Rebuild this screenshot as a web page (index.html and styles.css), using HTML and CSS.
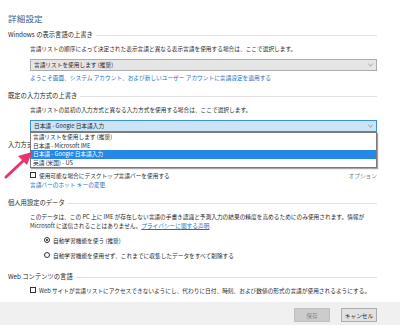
FILE: index.html
```html
<!DOCTYPE html>
<html lang="ja">
<head>
<meta charset="utf-8">
<title>詳細設定</title>
<link rel="stylesheet" href="styles.css">
</head>
<body>
<div class="window">
  <main class="content">
    <h1 class="title">詳細設定</h1>

    <section class="group">
      <h2 class="group-head">Windows の表示言語の上書き</h2>
      <p class="desc indent">言語リストの順序によって決定された表示言語と異なる表示言語を使用する場合は、ここで選択します。</p>
      <div class="select indent">
        <span>言語リストを使用します (推奨)</span>
        <svg class="chev" viewBox="0 0 6 4"><path d="M0.5 0.8 L3 3.2 L5.5 0.8" fill="none" stroke="#666" stroke-width="0.7"/></svg>
      </div>
      <a class="link indent after-select">ようこそ画面、システム アカウント、および新しいユーザー アカウントに言語設定を適用する</a>
    </section>

    <section class="group">
      <h2 class="group-head">既定の入力方式の上書き</h2>
      <p class="desc indent">言語リストの最初の入力方式と異なる入力方式を使用する場合は、ここで選択します。</p>
      <div class="select select-open indent">
        <span>日本語 - Google 日本語入力</span>
        <svg class="chev" viewBox="0 0 6 4"><path d="M0.5 0.8 L3 3.2 L5.5 0.8" fill="none" stroke="#555" stroke-width="0.7"/></svg>
        <ul class="dropdown">
          <li class="option">言語リストを使用します (推奨)</li>
          <li class="option">日本語 - Microsoft IME</li>
          <li class="option option-active">日本語 - Google 日本語入力</li>
          <li class="option">英語 (米国) - US</li>
        </ul>
      </div>
    </section>

    <section class="group">
      <h2 class="group-head">入力方式の切り替え</h2>
      <label class="check-row indent first-row"><span class="check"></span>アプリ ウィンドウごとに異なる入力方式を設定する</label>
      <div class="check-row indent row-gap">
        <span class="check"></span><span class="grow">使用可能な場合にデスクトップ言語バーを使用する</span>
        <span class="muted">オプション</span>
      </div>
      <a class="link indent">言語バーのホット キーの変更</a>
    </section>

    <section class="group">
      <h2 class="group-head">個人用設定のデータ</h2>
      <p class="desc desc-multi indent">このデータは、この PC 上に IME が存在しない言語の手書き認識と予測入力の結果の精度を高めるためにのみ使用されます。情報が<br>Microsoft に送信されることはありません。<a class="link-inline">プライバシーに関する声明</a></p>
      <label class="radio-row radio-indent first-row"><span class="radio radio-on"></span>自動学習機能を使う (推奨)</label>
      <label class="radio-row radio-indent row-gap"><span class="radio"></span>自動学習機能を使用せず、これまでに収集したデータをすべて削除する</label>
    </section>

    <section class="group group-last">
      <h2 class="group-head">Web コンテンツの言語</h2>
      <label class="check-row indent web-row"><span class="check"></span>Web サイトが言語リストにアクセスできないようにし、代わりに日付、時刻、および数値の形式の言語が使用されるようにする。</label>
    </section>
  </main>

  <footer class="footer">
    <button class="btn btn-disabled" disabled>保存</button>
    <button class="btn">キャンセル</button>
  </footer>

  <svg class="arrow" viewBox="0 0 40 44" width="40" height="44">
    <line x1="6" y1="37" x2="23" y2="21" stroke="#e8356e" stroke-width="3" stroke-linecap="round"/>
    <polygon points="32,12 27,25 18,16" fill="#e8356e"/>
  </svg>
</div>
</body>
</html>
```

FILE: styles.css
```css
* {
  box-sizing: border-box;
  margin: 0;
  padding: 0;
}

html, body {
  width: 400px;
  height: 325px;
  overflow: hidden;
  background: #fff;
}

body {
  font-family: "Noto Sans CJK JP", "Noto Sans", sans-serif;
  font-size: 5.7px;
  color: #2a2a2a;
}

.window {
  position: relative;
  height: 325px;
  display: flex;
  flex-direction: column;
}

.content {
  flex: 1;
  padding: 12px 23px 0 8px;
  display: flex;
  flex-direction: column;
}

.title {
  font-size: 8.5px;
  font-weight: normal;
  line-height: 12px;
  height: 12px;
  color: #345f8e;
  letter-spacing: 0.2px;
}

.group {
  display: flex;
  flex-direction: column;
  margin-top: 8px;
}

.title + .group {
  margin-top: 6px;
}

.group-last {
  margin-top: 12px;
}

.group-head {
  display: flex;
  align-items: center;
  gap: 3px;
  font-size: 6.3px;
  font-weight: normal;
  line-height: 10px;
  height: 10px;
  color: #2a2a2a;
  white-space: nowrap;
}

.group-head::after {
  content: "";
  flex: 1;
  height: 1px;
  background: #e2e2e2;
}

.indent {
  margin-left: 22px;
}

.desc {
  line-height: 10px;
  height: 10px;
  margin-top: 4px;
  white-space: nowrap;
}

.desc-multi {
  line-height: 9px;
  height: 18px;
}

.select {
  position: relative;
  margin-top: 5px;
  height: 12px;
  border: 1px solid #adadad;
  background: #e5e5e5;
  padding: 0 3px 0 3px;
  display: flex;
  align-items: center;
  justify-content: space-between;
  line-height: 10px;
}

.select-open {
  background: #cde4f7;
  border-color: #3c8fd9;
}

.chev {
  width: 5px;
  height: 4px;
}

.dropdown {
  position: absolute;
  top: 11px;
  left: -1px;
  right: -1px;
  list-style: none;
  background: #fff;
  border: 1px solid #7a7a7a;
  box-shadow: 1px 1px 1px rgba(0, 0, 0, 0.35);
  z-index: 3;
}

.option {
  height: 8.5px;
  line-height: 8.5px;
  padding-left: 2px;
  white-space: nowrap;
}

.option-active {
  background: #2488e8;
  color: #fff;
}

.link {
  display: block;
  color: #1f6fc0;
  line-height: 10px;
  height: 10px;
  white-space: nowrap;
}

.after-select {
  margin-top: 2px;
}

.link-inline {
  color: #1f6fc0;
  text-decoration: underline;
}

.check-row,
.radio-row {
  display: flex;
  align-items: center;
  height: 10px;
  white-space: nowrap;
}

.first-row {
  margin-top: 5px;
}

.row-gap {
  margin-top: 5px;
}

.web-row {
  margin-top: 3px;
}

.grow {
  flex: 1;
}

.muted {
  color: #7d7d7d;
}

.check {
  width: 6px;
  height: 6px;
  border: 1px solid #333;
  background: #fff;
  margin-right: 3px;
  flex: none;
}

.radio-indent {
  margin-left: 36px;
}

.radio {
  width: 6px;
  height: 6px;
  border: 1px solid #333;
  border-radius: 50%;
  background: #fff;
  margin-right: 3px;
  flex: none;
  display: flex;
  align-items: center;
  justify-content: center;
}

.radio-on::after {
  content: "";
  width: 2.6px;
  height: 2.6px;
  border-radius: 50%;
  background: #222;
}

.footer {
  height: 23px;
  background: #f0f0f0;
  display: flex;
  justify-content: flex-end;
  align-items: flex-start;
  padding: 6px 23px 0 0;
  gap: 11px;
}

.btn {
  height: 14px;
  width: 36px;
  font-family: inherit;
  font-size: 5.7px;
  color: #222;
  background: #e1e1e1;
  border: 1px solid #adadad;
}

.btn-disabled {
  background: #cccccc;
  border-color: #bfbfbf;
  color: #8a8a8a;
}

.arrow {
  position: absolute;
  left: 0;
  top: 140px;
  z-index: 5;
}
```
